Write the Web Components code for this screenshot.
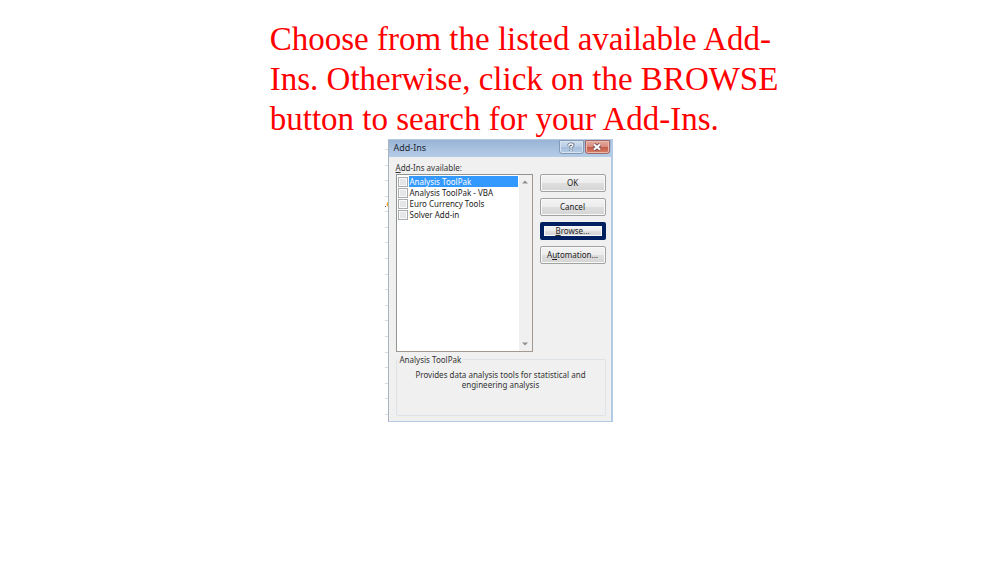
<!DOCTYPE html>
<html lang="en">
<head>
<meta charset="utf-8">
<title>Add-Ins</title>
<style>
  body {
    margin: 0;
    background: #fff;
    font-family: "Noto Sans", "Open Sans", sans-serif;
  }
</style>
</head>
<body>
<slide-page>
  <slide-caption slot="caption">
    <span>Choose from the listed available Add-</span>
    <span>Ins. Otherwise, click on the BROWSE</span>
    <span>button to search for your Add-Ins.</span>
  </slide-caption>
  <sheet-edge></sheet-edge>
  <addins-dialog></addins-dialog>
</slide-page>

<script>
(function () {
  const SHEET_ROWS = 18;
  const ADDINS = ['Analysis ToolPak', 'Analysis ToolPak - VBA', 'Euro Currency Tools', 'Solver Add-in'];

  function define(name, html) {
    customElements.define(name, class extends HTMLElement {
      constructor() {
        super();
        this.attachShadow({ mode: 'open' }).innerHTML = html;
      }
    });
  }

  define('slide-page', `
    <style>
      :host { display: block; padding-top: 19px; }
      .stage { display: flex; justify-content: center; padding-right: 2px; }
    </style>
    <slot name="caption"></slot>
    <main class="stage"><slot></slot></main>
  `);

  define('slide-caption', `
    <style>
      :host { display: block; padding-left: 27%; }
      h1 {
        margin: 0;
        color: #f00;
        font: 400 33px/40px "Liberation Serif", serif;
      }
      ::slotted(span) { display: block; white-space: nowrap; }
    </style>
    <h1><slot></slot></h1>
  `);

  // Sliver of the worksheet showing behind the dialog
  define('sheet-edge', `
    <style>
      :host {
        position: relative;
        display: flex;
        flex-direction: column;
        justify-content: space-between;
        width: 3px;
        padding: 10px 0 7px;
      }
      i { height: 1px; background: #d8dcdf; }
      svg { position: absolute; left: 0; top: 61px; }
    </style>
    ${'<i></i>'.repeat(SHEET_ROWS)}
    <svg width="3" height="9" viewBox="0 0 3 9" aria-hidden="true">
      <path d="M0 6h1v1H0z" fill="#555"/>
      <path d="M3 2Q0 4 3 7z" fill="#f5a623"/>
    </svg>
  `);

  define('dialog-button', `
    <style>
      :host { display: block; }
      button {
        display: block;
        box-sizing: border-box;
        width: 100%;
        height: 18px;
        padding: 0;
        border: 1px solid #a0a4a0;
        border-radius: 2px;
        background: linear-gradient(#f4f4f4, #ececec 50%, #dfdfdf 50%, #d4d4d4);
        box-shadow: inset 0 0 0 1px #f8f8f8;
        color: #222;
        font: inherit;
        line-height: 16px;
      }
      :host([marked]) button {
        border: 4px solid #001f60;
        line-height: 10px;
      }
    </style>
    <button type="button"><slot></slot></button>
  `);

  define('title-bar', `
    <style>
      :host {
        display: flex;
        align-items: flex-start;
        gap: 1px;
        height: 17px;
        padding: 0 1px 0 5px;
        background: linear-gradient(#98b3d5, #a8c1df 50%, #b5cce6);
      }
      h2 {
        flex: 1;
        margin: 0;
        color: #1c2733;
        font-size: 9px;
        font-weight: 400;
        line-height: 16px;
      }
      button {
        box-sizing: border-box;
        width: 25px;
        height: 14px;
        padding: 0;
        border: 1px solid #8499b4;
        border-radius: 0 0 3px 3px;
        background: linear-gradient(#cddcee, #b9cde4 50%, #a6bedb 50%, #b6cce4);
        box-shadow: inset 0 0 0 1px #d5e3f2;
      }
      button.close {
        border-color: #a06a6c;
        background: linear-gradient(#e5aa9f, #d88b7e 50%, #c45a47 50%, #d58068);
        box-shadow: inset 0 0 0 1px #eab9ae;
      }
      svg { display: block; margin: 0 auto; }
    </style>
    <h2><slot></slot></h2>
    <button type="button" aria-label="Help">
      <svg width="10" height="10" viewBox="0 0 10 10" fill="none">
        <path d="M3 4V3Q3 2 5 2T7 3Q7 4 5 5V6.5M5 7.5V9" stroke="#5c6b80" stroke-width="3"/>
        <path d="M3 4V3Q3 2 5 2T7 3Q7 4 5 5V6.5M5 7.5V9" stroke="#fff" stroke-width="1.4"/>
      </svg>
    </button>
    <button type="button" class="close" aria-label="Close">
      <svg width="12" height="10" viewBox="0 0 12 10" fill="none">
        <path d="M3 2.5L9 7.5M9 2.5L3 7.5" stroke="#6e4a52" stroke-width="3.8"/>
        <path d="M3 2.5L9 7.5M9 2.5L3 7.5" stroke="#fff" stroke-width="2.2"/>
      </svg>
    </button>
  `);

  define('addin-list', `
    <style>
      :host {
        display: flex;
        box-sizing: border-box;
        height: 178px;
        border: 1px solid #8f9590;
        border-right-color: #a3988f;
        border-bottom-color: #a3988f;
        background: #fff;
      }
      ul {
        flex: 1;
        margin: 0;
        padding: 1px 1px 0;
        list-style: none;
      }
      label {
        display: flex;
        align-items: center;
        height: 11px;
        line-height: 11px;
        color: #222;
      }
      label span { flex: 1; padding-left: 1px; white-space: nowrap; }
      li:first-child span { background: #3399ff; color: #fff; }
      input {
        appearance: none;
        box-sizing: border-box;
        width: 10px;
        height: 10px;
        margin: 0 1px 0 0;
        border: 1px solid #a9acaf;
        background: #e4e6e8;
        box-shadow: inset 0 0 0 1px #fafafa;
      }
      .scroll {
        display: flex;
        flex-direction: column;
        justify-content: space-between;
        width: 13px;
        background: #f0f0f0;
      }
      .scroll button {
        display: flex;
        align-items: center;
        justify-content: center;
        height: 14px;
        padding: 0;
        border: 0;
        background: none;
      }
    </style>
    <ul aria-label="Add-Ins available">
      ${ADDINS.map(name => `<li><label><input type="checkbox"><span>${name}</span></label></li>`).join('')}
    </ul>
    <div class="scroll">
      <button type="button" aria-label="Scroll up">
        <svg width="6" height="4" viewBox="0 0 6 4"><path d="M0 3.5L3 0.5L6 3.5z" fill="#8b8f93"/></svg>
      </button>
      <button type="button" aria-label="Scroll down">
        <svg width="6" height="4" viewBox="0 0 6 4"><path d="M0 0.5L3 3.5L6 0.5z" fill="#8b8f93"/></svg>
      </button>
    </div>
  `);

  define('addins-dialog', `
    <style>
      :host {
        display: flex;
        flex-direction: column;
        box-sizing: border-box;
        width: 225px;
        border: solid #b4cbe6;
        border-width: 1px 2px 1px 1px;
        border-left-color: #aab4be;
        background: #f0f0f0;
        color: #333;
        font-size: 8px;
      }
      .body { padding: 5px 5px 5px 7px; }
      .name { padding-bottom: 1px; line-height: 11px; }
      .main { display: flex; gap: 7px; }
      addin-list { flex: 1; }
      .buttons {
        display: flex;
        flex-direction: column;
        gap: 6px;
        width: 66px;
      }
      fieldset {
        min-width: 0;
        height: 62px;
        margin: 2px 0 0;
        padding: 5px 10px 0;
        border: 1px solid #dde3e6;
        border-radius: 2px;
        box-sizing: border-box;
      }
      legend { margin-left: -9px; padding: 0 2px; line-height: 11px; }
      p { margin: 0; text-align: center; line-height: 10px; }
    </style>
    <title-bar>Add-Ins</title-bar>
    <div class="body">
      <div class="name"><u>A</u>dd-Ins available:</div>
      <div class="main">
        <addin-list></addin-list>
        <div class="buttons">
          <dialog-button>OK</dialog-button>
          <dialog-button>Cancel</dialog-button>
          <dialog-button marked><u>B</u>rowse...</dialog-button>
          <dialog-button>A<u>u</u>tomation...</dialog-button>
        </div>
      </div>
      <fieldset>
        <legend>Analysis ToolPak</legend>
        <p>Provides data analysis tools for statistical and engineering analysis</p>
      </fieldset>
    </div>
  `);
})();
</script>
</body>
</html>
